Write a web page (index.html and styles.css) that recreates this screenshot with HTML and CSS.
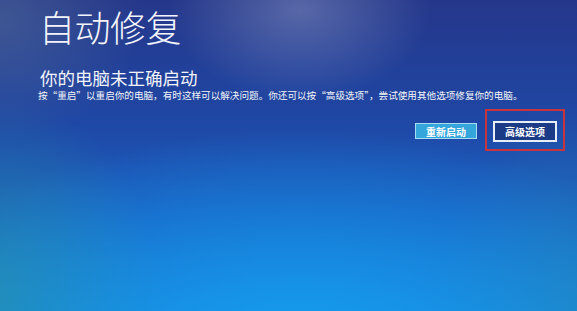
FILE: index.html
```html
<!DOCTYPE html>
<html lang="zh-CN">
  <head>
    <meta charset="utf-8" />
    <meta name="viewport" content="width=device-width, initial-scale=1.0" />
    <link rel="stylesheet" href="styles.css">
  </head>

  <body>
    <div class="repair-screen">
      <h1 class="repair-title">自动修复</h1>

      <h2 class="repair-subtitle">你的电脑未正确启动</h2>
      <p class="repair-desc">按“重启”以重启你的电脑，有时这样可以解决问题。你还可以按“高级选项”，尝试使用其他选项修复你的电脑。</p>

      <!--buttons sit at the right edge, the second one is circled in red-->
      <div class="repair-actions">
        <button class="repair-btn btn-restart">重新启动</button>
        <span class="mark-box">
          <button class="repair-btn btn-advanced">高级选项</button>
        </span>
      </div>
    </div>
  </body>
</html>
```

FILE: styles.css
```css
html,
body {
  margin: 0;
  height: 100%;
}

body {
  font-family: "Noto Sans CJK SC", "Noto Sans", sans-serif;
  color: #f2f4fa;
}

/*blue screen with the light haze on top and the brighter lower middle:*/
.repair-screen {
  height: 100%;
  box-sizing: border-box;
  padding: 6px 12px 0 38px;
  background:
    radial-gradient(ellipse 130px 90px at 300px 10px, rgba(150, 160, 200, 0.45), rgba(150, 160, 200, 0) 100%),
    radial-gradient(ellipse 420px 200px at 300px 330px, rgba(20, 160, 240, 0.85), rgba(20, 160, 240, 0) 100%),
    radial-gradient(ellipse 160px 200px at 0px 300px, rgba(40, 140, 160, 0.75), rgba(40, 140, 160, 0) 100%),
    radial-gradient(ellipse 140px 200px at 577px 300px, rgba(40, 130, 170, 0.5), rgba(40, 130, 170, 0) 100%),
    radial-gradient(ellipse 140px 120px at 0px 20px, rgba(80, 105, 150, 0.6), rgba(80, 105, 150, 0) 100%),
    linear-gradient(to bottom, #25378a 0%, #1f48a6 40%, #1a62c4 70%, #1a7ed6 100%);
}

.repair-title {
  margin: 0 0 0 1px;
  font-size: 36px;
  font-weight: 300;
  line-height: 40px;
  letter-spacing: -0.5px;
}

.repair-subtitle {
  margin: 22px 0 0 2px;
  font-size: 17.5px;
  font-weight: 400;
  line-height: 20px;
}

.repair-desc {
  margin: 2px 0 0;
  font-size: 9.6px;
  line-height: 11px;
  white-space: nowrap;
}

.repair-actions {
  display: flex;
  justify-content: flex-end;
  align-items: center;
  gap: 8px;
  margin-top: 8px;
}

.repair-btn {
  font-family: inherit;
  font-size: 10px;
  font-weight: 700;
  color: #ffffff;
  padding: 0;
  cursor: pointer;
}

.btn-restart {
  width: 62px;
  height: 16px;
  margin-top: 2px;
  background-color: #35a6dc;
  border: 1px solid #a8dcf0;
}

.btn-advanced {
  width: 64px;
  height: 21px;
  background-color: #1b3b86;
  border: 2px solid #e8eef8;
}

/*red marker drawn round the advanced options button:*/
.mark-box {
  display: flex;
  padding: 10px 6px 7px 6px;
  border: 2px solid #c8343e;
}
```
